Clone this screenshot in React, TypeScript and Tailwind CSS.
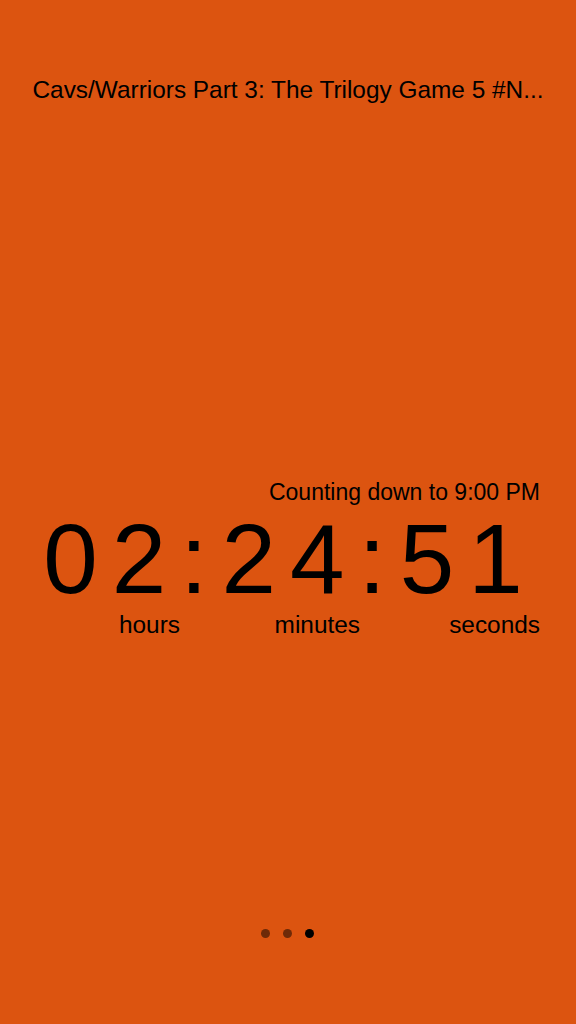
const App = () => {
  const labels = ["hours", "minutes", "seconds"];
  return (
    <div
      className="w-[576px] h-[1024px] bg-[#dc5410] text-black flex flex-col overflow-hidden"
      style={{ fontFamily: "'Liberation Sans', Arial, sans-serif" }}
    >
      <div className="pt-[74px] px-6 text-center text-[24.4px] leading-[32px] whitespace-nowrap">
        Cavs/Warriors Part 3: The Trilogy Game 5 #N...
      </div>

      <div className="flex-1 flex flex-col justify-center pt-[82px]">
        <div className="text-right text-[23px] leading-[28px] pr-9">Counting down to 9:00 PM</div>
        <div className="text-center text-[98px] leading-[98px] tracking-[14px] pl-[4px] mt-[4px]">
          02:24:51
        </div>
        <div className="grid grid-cols-3 w-[540px] text-[24.4px] leading-[30px] mt-[2px]">
          {labels.map((l) => (
            <span key={l} className="text-right">
              {l}
            </span>
          ))}
        </div>
      </div>

      <div className="flex justify-center gap-[13px] pb-[86px] pr-[2px]">
        <span className="w-[9px] h-[9px] rounded-full bg-[#6e2a08]" />
        <span className="w-[9px] h-[9px] rounded-full bg-[#6e2a08]" />
        <span className="w-[9px] h-[9px] rounded-full bg-black" />
      </div>
    </div>
  );
};

export default App;
